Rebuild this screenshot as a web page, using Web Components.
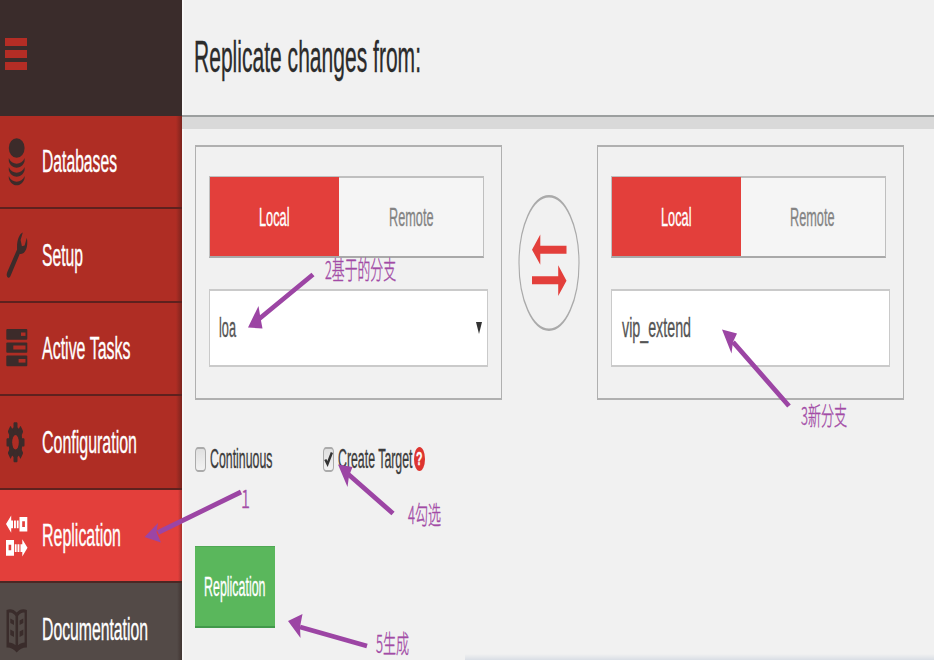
<!DOCTYPE html>
<html lang="en">
<head>
<meta charset="utf-8">
<title>Replication</title>
<style>
html, body { margin: 0; height: 100%; overflow: hidden; }
body { font-family: "Liberation Sans", "Noto Sans CJK SC", sans-serif; background: #f1f1f1; }
</style>
</head>
<body>
<replication-page></replication-page>
<script>
const define = (name, html, after) => {
  const tpl = document.createElement('template');
  tpl.innerHTML = html;
  customElements.define(name, class extends HTMLElement {
    connectedCallback() {
      if (this.shadowRoot) return;
      this.attachShadow({ mode: 'open' }).appendChild(tpl.content.cloneNode(true));
      if (after) after(this, this.shadowRoot);
    }
  });
};

/* Text condensed horizontally to a given width. */
define('fit-text', `
<style>
:host { display: inline-block; flex: none; white-space: nowrap; }
span { display: inline-block; transform-origin: 0 50%; -webkit-text-stroke: var(--weight, .35px) currentColor; }
</style><span><slot></slot></span>`, (el, root) => {
  const w = +el.getAttribute('w'), span = root.querySelector('span');
  el.style.width = w + 'px';
  span.style.transform = 'scaleX(' + w / span.getBoundingClientRect().width + ')';
});

define('nav-item', `
<style>
:host { display: flex; align-items: center; box-sizing: border-box; height: 93.5px; flex: none;
  border-bottom: 2px solid #5e211e; background: linear-gradient(90deg, transparent 176px, rgba(60,25,22,.45) 182px) #af2d24; color: #fff; font-size: 31px; }
:host([active]) { background: linear-gradient(90deg, transparent 178px, rgba(60,25,22,.35) 182px) #e33f3b; border-color: #4a2724; }
:host([dark]) { background: linear-gradient(90deg, transparent 177px, rgba(40,25,22,.45) 182px) #534a47; }
.icon { width: 41.5px; height: 60px; flex: none; }
.label { padding-top: 2px; }
::slotted(svg) { display: block; }
</style><div class="icon"><slot name="icon"></slot></div><div class="label"><slot></slot></div>`);

define('side-bar', `
<style>
:host { display: flex; flex-direction: column; width: 182px; flex: none; overflow: hidden; background: #3a2c2b; }
.top { height: 115.5px; flex: none; box-sizing: border-box; padding: 37.5px 0 0 5px; display: flex; flex-direction: column; gap: 4px; }
.top i { width: 22px; height: 8px; background: #b42d25; }
</style>
<div class="top"><i></i><i></i><i></i></div>
<nav-item><svg slot="icon" width="34" height="60" viewBox="0 0 34 60" fill="#3c2b2a">
  <ellipse cx="16.7" cy="17" rx="7.9" ry="9.8"/>
  <path d="M8.8 27c2.8 7.5 13 7.5 15.8 0v3.3c-2.5 8.5-13.3 8.5-15.8 0zM8.8 36c2.8 7.5 13 7.5 15.8 0v3.3c-2.5 8.5-13.3 8.5-15.8 0zM8.8 45c2.8 7.5 13 7.5 15.8 0v2.2c-2.5 9.5-13.3 9.5-15.8 0z"/>
  </svg><fit-text w="75">Databases</fit-text></nav-item>
<nav-item><svg slot="icon" width="34" height="60" viewBox="0 0 34 60" fill="#3c2b2a">
  <path d="M22.8 7.5L20.600 15l1.3 6.2 2.7-.8 2.2-7.6c1.400 6.7-.3 14-4.2 15.8-1 .4-2 .5-2.8.2L10.500 51c-1.1 2.8-3.500 2.2-3.8-.7-.1-1.1.2-2.3.6-3.3l9.8-22.6c-.5-8 1.8-15.4 5.7-16.9z"/>
  </svg><fit-text w="41">Setup</fit-text></nav-item>
<nav-item><svg slot="icon" width="34" height="60" viewBox="0 0 34 60">
  <g fill="#3c2b2a"><rect x="6.3" y="11" width="21" height="10.8" rx="1"/><rect x="6.3" y="24.5" width="21" height="10.2" rx="1"/><rect x="6.3" y="37.5" width="21" height="10.8" rx="1"/></g>
  <g fill="#af2d24"><rect x="21" y="14.5" width="4.5" height="3.4"/><rect x="13.3" y="27.5" width="12.2" height="4"/><rect x="18.6" y="41" width="6.9" height="3.6"/></g>
  </svg><fit-text w="88.5">Active Tasks</fit-text></nav-item>
<nav-item><svg slot="icon" width="34" height="60" viewBox="0 0 34 60">
  <g fill="#3c2b2a" transform="translate(15.5 30.3) scale(1 2.17)"><circle r="7"/>
  <g><rect x="-2" y="-9.2" width="4" height="18.4" rx=".7"/><rect x="-9" y="-1.9" width="18" height="3.8" rx=".7"/></g>
  <g transform="rotate(45)"><rect x="-2" y="-9" width="4" height="18" rx=".7"/><rect x="-9" y="-2" width="18" height="4" rx=".7"/></g></g>
  <ellipse cx="15.5" cy="30.3" rx="3.3" ry="7.3" fill="#af2d24"/>
  </svg><fit-text w="95">Configuration</fit-text></nav-item>
<nav-item active><svg slot="icon" width="34" height="60" viewBox="0 0 34 60" fill="#fff">
  <path d="M6 19l5.2-8.4v4.8h1.8v7.8h-1.8v4.6zM14 15.4h1.9v7.8H14zM16.8 15.4h1.8v7.8h-1.8zM19.5 12h7.8v14.5h-7.8zM22.2 16.3v5.6h2.7v-5.6z" fill-rule="evenodd"/>
  <path d="M27.5 42.8l-5.2-8.6v5h-1.8V47h1.8v4.6zM19.4 39.2h-1.9V47h1.9zM16.6 39.2h-1.8V47h1.8zM14 35H6v15.7h8zM11.2 39.7v5.6H8.6v-5.6z" fill-rule="evenodd"/>
  </svg><fit-text w="79">Replication</fit-text></nav-item>
<nav-item dark><svg slot="icon" width="34" height="60" viewBox="0 0 34 60">
  <path d="M6.5 11c3.6-1.7 7.5-.8 10.2 2.6 2.7-3.4 6.6-4.3 10.2-2.6v37.5c-3.6-.3-7 1.3-10.2 5.1-3.2-3.8-6.6-5.4-10.2-5.1z" fill="#3a2c2b"/>
  <path d="M9 13.7c2.5-.5 4.8.8 6.5 3.3v29.2c-2-1.7-4.2-2.6-6.5-2.6zM24.6 13.7c-2.5-.5-4.8.8-6.5 3.3v29.2c2-1.7 4.2-2.6 6.5-2.6z" fill="#534a47"/>
  <path d="M10.3 19.5l3.7 2v4.6l-3.7-2zM10.3 30.5l3.7 2v5.6l-3.7-2zM23.3 19.5l-3.7 2v4.6l3.7-2zM23.3 30.5l-3.7 2v5.6l3.7-2z" fill="#3a2c2b"/>
  </svg><fit-text w="106">Documentation</fit-text></nav-item>`);

define('page-header', `
<style>
:host { display: flex; align-items: center; box-sizing: border-box; height: 129px; flex: none; padding: 0 0 3px 12px; color: #2b2b2b; font-size: 44.5px;
  border-bottom: 12px solid #d9d9d9; box-shadow: inset 0 -2px #9c9f9f; }
</style><slot></slot>`);

define('source-toggle', `
<style>
:host { display: flex; box-sizing: border-box; width: 275px; height: 82px; border: solid #bfbfbf; border-width: 2px 1px; border-bottom-color: #a9a9a9; background: #f5f5f5; font-size: 26.5px; }
div { display: flex; align-items: center; justify-content: center; color: #848484; flex: 1; padding-top: 1px; box-sizing: border-box; }
.on { background: #e33f3b; color: #fff; flex: 0 0 129px; margin-top: -1px; padding-top: 2px; }
</style><div class="on"><fit-text w="30.5">Local</fit-text></div><div><fit-text w="44.5">Remote</fit-text></div>`);

define('db-field', `
<style>
:host { display: flex; align-items: center; justify-content: space-between; box-sizing: border-box; width: 279px; height: 78px; padding: 0 5px 0 9px;
  border: solid #cacaca; border-width: 2px 1px; background: #fff; color: #555; font-size: 27px; }
svg { display: none; }
:host([select]) svg { display: block; }
</style><slot></slot><svg width="6" height="12" viewBox="0 0 6 12"><path d="M0 0h6L3 12z" fill="#333"/></svg>`);

define('endpoint-panel', `
<style>
:host { display: flex; flex-direction: column; gap: 31px; box-sizing: border-box; width: 307px; height: 255px; padding: 29px 13px 0; border: solid #b0b0b0; border-width: 2px 1px; }
</style><source-toggle></source-toggle><slot></slot>`);

define('swap-button', `
<style>:host { display: block; } svg { display: block; }</style>
<svg width="62" height="138" viewBox="0 0 62 62" preserveAspectRatio="none">
<circle cx="31" cy="31" r="30" fill="none" stroke="#aaa" stroke-width="1.1"/>
<path d="M14 25l8.3-6.8v5h26.2v3.6H22.3v5zM48.5 39l-8.3-7v5H14v3.6h26.2v5.2z" fill="#e33f3b"/></svg>`);

define('check-option', `
<style>
:host { display: flex; align-items: center; font-size: 27px; color: #3c3c3c; height: 30px; }
.box { box-sizing: border-box; width: 11px; height: 25px; border: solid #ababab; border-width: 2px 1px; border-radius: 3px/5px; background: linear-gradient(#e0e0e0, #f2f2f2); margin-right: 4px; }
.box svg { display: none; }
:host([checked]) .box svg { display: block; }
</style><div class="box"><svg width="9" height="21" viewBox="0 0 9 21"><path d="M1.3 10.500l2.200 4.500L7.900 3.500" fill="none" stroke="#333" stroke-width="2.4"/></svg></div><slot></slot>`);

define('help-badge', `
<style>
:host { display: flex; align-items: center; justify-content: center; width: 11px; height: 24px; border-radius: 50%; background: #dd3430; color: #fff; font-weight: bold; font-size: 19px; margin-left: 2px; }
</style><fit-text w="6.5">?</fit-text>`);

define('action-button', `
<style>
:host { display: flex; align-items: center; justify-content: center; box-sizing: border-box; width: 80px; height: 82px; padding-top: 2px; background: #5ab75c; border-bottom: 2px solid #41994a; border-top: 1px solid #50a854; color: #fff; font-size: 27px; }
</style><slot></slot>`);

define('note-layer', `
<style>
:host { position: absolute; inset: 0; color: #a24ba6; font: 300 25px/26px "Noto Sans CJK SC", sans-serif; --weight: .45px; }
svg { position: absolute; inset: 0; }
fit-text { position: absolute; }
</style>
<svg width="934" height="660" viewBox="0 0 934 660" fill="#9c45a4" stroke="#9c45a4">
<g stroke-width="4.8"><path d="M241 492L158 532.5M313 274.5L259 319M789 406L733 342M393 513.5L348 474M367 646L300 627"/></g>
<g stroke="none"><path d="M144.5 537L158 523L156.5 532 161 542.5zM248 327.5L258.500 306 260.5 318 262.500 328.5zM722 329.5L737 333.5 733 342 731.5 353.5zM338 464.5L352.500 467 349 476 347.5 487zM288 621L302.5 614 300 627 300.5 638z"/></g>
</svg>
<fit-text w="9" style="left:240.5px;top:484px">1</fit-text>
<fit-text w="71" style="left:324.5px;top:255px">2基于的分支</fit-text>
<fit-text w="46" style="left:800.5px;top:401px">3新分支</fit-text>
<fit-text w="33" style="left:407.5px;top:500px">4勾选</fit-text>
<fit-text w="33" style="left:375.5px;top:629px">5生成</fit-text>`);

define('replication-page', `
<style>
:host { position: relative; display: flex; width: 934px; height: 660px; overflow: hidden; }
main { flex: 1; display: flex; flex-direction: column; box-shadow: inset 2px 0 #f8f8f8; }
.body { padding: 16px 0 0 13px; flex: 1; }
.row { display: flex; }
.panels { gap: 16.5px; }
swap-button { margin: 49px -.25px 0; }
.options { padding-top: 44px; gap: 50px; height: 30px; }
action-button { margin-top: 72px; }
.foot { height: 6px; margin-left: 283px; background: linear-gradient(#f1f1f1, #d9dee5); }
</style>
<side-bar></side-bar>
<main>
  <page-header><fit-text w="227">Replicate changes from:</fit-text></page-header>
  <div class="body">
    <div class="row panels">
      <endpoint-panel><db-field select><fit-text w="17">loa</fit-text></db-field></endpoint-panel>
      <swap-button></swap-button>
      <endpoint-panel><db-field style="font-size:28.5px;padding:0 5px 2px 10px"><fit-text w="69">vip_extend</fit-text></db-field></endpoint-panel>
    </div>
    <div class="row options">
      <check-option><fit-text w="62.5">Continuous</fit-text></check-option>
      <check-option checked><fit-text w="74.5">Create Target</fit-text><help-badge></help-badge></check-option>
    </div>
    <action-button><fit-text w="61.5">Replication</fit-text></action-button>
  </div>
  <div class="foot"></div>
</main>
<note-layer></note-layer>`);
</script>
</body>
</html>
